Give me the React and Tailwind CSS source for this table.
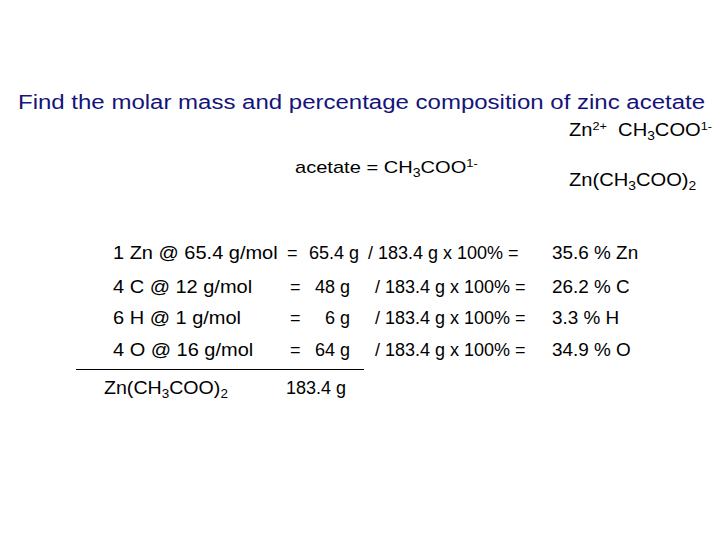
import React from "react";

const F = { fontFamily: '"Liberation Sans", Arial, sans-serif' };

function Sub({ children }) {
  return <span className="relative top-[4px] text-[12px]">{children}</span>;
}
function Sup({ children }) {
  return <span className="relative top-[-6px] text-[11px]">{children}</span>;
}

function Row({ h, label, value, result }) {
  return (
    <div className={`flex ${h}`}>
      <span className="w-[177px] origin-left scale-x-[1.11]">{label}</span>
      <span className="w-[22px]">=</span>
      <span className="w-[38px] text-right">{value}</span>
      <span className="w-[25px]" />
      <span className="w-[177px]">/ 183.4 g x 100% =</span>
      <span className="origin-left scale-x-[1.05]">{result}</span>
    </div>
  );
}

export default function App() {
  return (
    <div className="relative w-[720px] h-[540px] bg-white overflow-hidden text-black" style={F}>
      <div className="absolute left-[18px] top-[92px] origin-left scale-x-[1.2] text-[20px] text-[#14147a] whitespace-pre leading-none">
        Find the molar mass and percentage composition of zinc acetate
      </div>
      <div className="absolute left-[569px] top-[122px] origin-left scale-x-[1.15] text-[17.5px] whitespace-pre leading-none">
        Zn<Sup>2+</Sup>  CH<Sub>3</Sub>COO<Sup>1-</Sup>
      </div>
      <div className="absolute left-[295px] top-[159px] origin-left scale-x-[1.18] text-[17px] whitespace-pre leading-none">
        acetate = CH<Sub>3</Sub>COO<Sup>1-</Sup>
      </div>
      <div className="absolute left-[569px] top-[172px] origin-left scale-x-[1.15] text-[17.5px] whitespace-pre leading-none">
        Zn(CH<Sub>3</Sub>COO)<Sub>2</Sub>
      </div>

      <div className="absolute left-[113px] top-[244px] text-[18px] leading-none whitespace-pre flex flex-col">
        <div className="flex h-[34px]">
          <span className="w-[174px] origin-left scale-x-[1.11]">1 Zn @ 65.4 g/mol</span>
          <span className="w-[22px]">=</span>
          <span className="w-[59px]">65.4 g</span>
          <span className="w-[184px]">/ 183.4 g x 100% =</span>
          <span className="origin-left scale-x-[1.05]">35.6 % Zn</span>
        </div>
        <Row h="h-[31px]" label="4 C @ 12 g/mol" value="48 g" result="26.2 % C" />
        <Row h="h-[32px]" label="6 H @ 1 g/mol" value="6 g" result="3.3 % H" />
        <Row h="h-[31px]" label="4 O @ 16 g/mol" value="64 g" result="34.9 % O" />
      </div>

      <div className="absolute left-[76px] top-[369px] w-[288px] h-px bg-black" />

      <div className="absolute left-[104px] top-[380px] origin-left scale-x-[1.12] text-[17.5px] whitespace-pre leading-none">
        Zn(CH<Sub>3</Sub>COO)<Sub>2</Sub>
      </div>
      <div className="absolute left-[286px] top-[379px] text-[18px] whitespace-pre leading-none">
        183.4 g
      </div>
    </div>
  );
}
